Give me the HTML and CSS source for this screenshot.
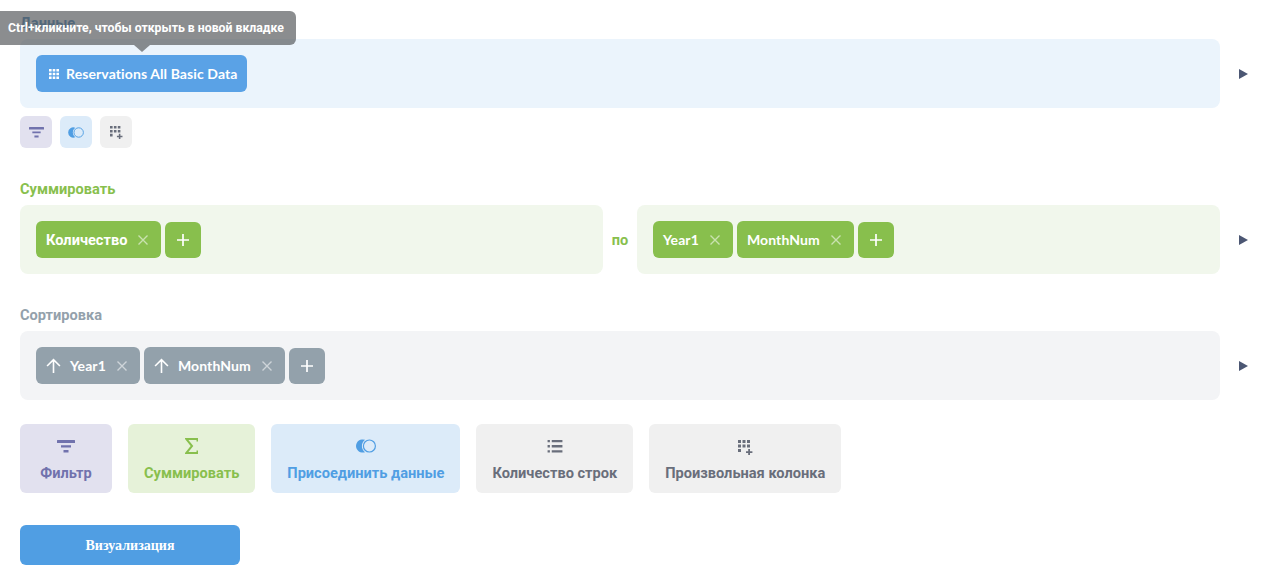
FILE: index.html
```html
<!DOCTYPE html>
<html lang="ru">
<head>
<meta charset="utf-8">
<title>Запрос</title>
<link rel="stylesheet" href="styles.css">
</head>
<body>
<svg class="defs" width="0" height="0" aria-hidden="true">
  <symbol id="i-filter" viewBox="0 0 18 13"><path d="M.5 0h17a.5.5 0 0 1 .5.500V3H0V.5A.5.5 0 0 1 .5 0zM4 5.200h10v2.300H4zM6.500 10h5v2.500h-5z"/></symbol>
  <symbol id="i-join" viewBox="0 0 20 14"><path d="M9.020 .86A7.600 7.600 0 0 0 9.020 13.140 6.600 6.600 0 1 1 9.020 .86z"/><circle cx="13.400" cy="7" r="6" fill="none" stroke="currentColor" stroke-width="1.200"/></symbol>
  <symbol id="i-custom" viewBox="0 0 15 15"><path d="M0 0h3v3H0zM4.500 0h3v3h-3zM9 0h3v3H9zM0 4.500h3v3H0zM4.500 4.500h3v3h-3zM9 4.500h3v3H9zM0 9h3v3H0zM10.200 9h1.800v2.200h2.400V13H12v2.200h-1.800V13H8v-1.800h2.200z"/></symbol>
  <symbol id="i-list" viewBox="0 0 16 14"><path d="M0 0h2.500v2.500H0zM0 5.500h2.500V8H0zM0 11h2.500v2.500H0zM4.500 0H16v2.500H4.500zM4.500 5.500H16V8H4.500zM4.500 11H16v2.500H4.500z"/></symbol>
  <symbol id="i-sigma" viewBox="0 0 13 16"><path d="M12.500 3.500V1H1.200l5.800 7-5.800 7H12.500v-2.500" fill="none" stroke="currentColor" stroke-width="2"/></symbol>
  <symbol id="i-x" viewBox="0 0 12 12"><path d="M1.500 1.500l9 9M10.500 1.500l-9 9" fill="none" stroke="currentColor" stroke-width="1.400"/></symbol>
  <symbol id="i-plus" viewBox="0 0 12 12"><path d="M6 0v12M0 6h12" fill="none" stroke="currentColor" stroke-width="1.700"/></symbol>
  <symbol id="i-up" viewBox="0 0 14 14"><path d="M7 14V1.500M1 7.500l6-6 6 6" fill="none" stroke="currentColor" stroke-width="1.500"/></symbol>
</svg>

<main class="page">
  <section class="step step-data">
    <h2 class="step-title title-data">Данные</h2>
    <div class="step-row">
      <div class="well well-data">
        <a class="pill pill-data">
          <svg class="grid-icon" viewBox="0 0 10 10" fill="currentColor"><path d="M0 0h2.600v2.600H0zM3.700 0h2.600v2.600H3.700zM7.400 0H10v2.600H7.400zM0 3.700h2.600v2.600H0zM3.700 3.700h2.600v2.600H3.700zM7.400 3.700H10v2.600H7.400zM0 7.400h2.600V10H0zM3.700 7.400h2.600V10H3.700zM7.400 7.400H10V10H7.400z"/></svg>
          Reservations All Basic Data
        </a>
      </div>
      <span class="play"></span>
    </div>
    <div class="mini-row">
      <span class="mini tone-filter"><svg class="mini-filter"><use href="#i-filter"/></svg></span>
      <span class="mini tone-join"><svg class="mini-join"><use href="#i-join"/></svg></span>
      <span class="mini tone-grey"><svg class="mini-custom"><use href="#i-custom"/></svg></span>
    </div>
  </section>

  <section class="step step-sum">
    <h2 class="step-title title-sum">Суммировать</h2>
    <div class="step-row">
      <div class="well well-sum well-half-a">
        <span class="pill pill-sum ru">Количество<svg class="x"><use href="#i-x"/></svg></span>
        <span class="add add-sum"><svg class="plus"><use href="#i-plus"/></svg></span>
      </div>
      <span class="by">по</span>
      <div class="well well-sum well-half-b">
        <span class="pill pill-sum">Year1<svg class="x"><use href="#i-x"/></svg></span>
        <span class="pill pill-sum">MonthNum<svg class="x"><use href="#i-x"/></svg></span>
        <span class="add add-sum"><svg class="plus"><use href="#i-plus"/></svg></span>
      </div>
      <span class="play"></span>
    </div>
  </section>

  <section class="step step-sort">
    <h2 class="step-title title-sort">Сортировка</h2>
    <div class="step-row">
      <div class="well well-sort">
        <span class="pill pill-sort"><svg class="up"><use href="#i-up"/></svg>Year1<svg class="x"><use href="#i-x"/></svg></span>
        <span class="pill pill-sort"><svg class="up"><use href="#i-up"/></svg>MonthNum<svg class="x"><use href="#i-x"/></svg></span>
        <span class="add add-sort"><svg class="plus"><use href="#i-plus"/></svg></span>
      </div>
      <span class="play"></span>
    </div>
  </section>

  <div class="actions">
    <button class="action tone-filter"><svg class="act-filter"><use href="#i-filter"/></svg>Фильтр</button>
    <button class="action tone-sum"><svg class="act-sigma"><use href="#i-sigma"/></svg>Суммировать</button>
    <button class="action tone-join"><svg class="act-join"><use href="#i-join"/></svg>Присоединить данные</button>
    <button class="action tone-grey"><svg class="act-list"><use href="#i-list"/></svg>Количество строк</button>
    <button class="action tone-grey"><svg class="act-custom"><use href="#i-custom"/></svg>Произвольная колонка</button>
  </div>

  <button class="visualize">Визуализация</button>

  <div class="tooltip">Ctrl+кликните, чтобы открыть в новой вкладке</div>
</main>
</body>
</html>
```

FILE: styles.css
```css
* { box-sizing: border-box; }
html, body { margin: 0; padding: 0; background: #fff; }
body { font-family: Lato, "Liberation Sans", sans-serif; font-size: 14px; overflow: hidden; height: 586px; }
.defs { position: absolute; }
svg { fill: currentColor; flex: none; }

.page { position: relative; padding: 15px 0 0 20px; width: 1272px; }

.step-title { margin: 0 0 7px; font: 700 14.6px/17px Roboto, "Liberation Sans", sans-serif; }
.title-data { color: #3f7fba; }
.title-sum { color: #88bf4d; }
.title-sort { color: #93a1ab; }

.step-sum { margin-top: 33px; }
.step-sort { margin-top: 33px; }

.step-row { display: flex; align-items: center; width: 1232px; }
.well { display: flex; align-items: center; gap: 4px; height: 69px; padding: 0 16px; border-radius: 8px; }
.well-data { width: 1200px; background: #ebf4fc; }
.well-sum { background: #f1f7ec; }
.well-half-a { width: 583px; }
.well-half-b { width: 583px; }
.well-sort { width: 1200px; background: #f3f4f6; }

.by { width: 34px; text-align: center; color: #88bf4d; font: 700 14.6px Roboto, sans-serif; }

.play { width: 0; height: 0; margin-left: 19px; border-left: 9px solid #4c5773; border-top: 5px solid transparent; border-bottom: 5px solid transparent; }

.pill { display: inline-flex; align-items: center; height: 37px; padding: 0 12px 0 10px; border-radius: 6px; color: #fff; font-weight: 700; font-size: 14px; letter-spacing: .1px; white-space: nowrap; }
.ru { font: 700 14.6px Roboto, "Liberation Sans", sans-serif; letter-spacing: 0; }
.pill-data { background: #5aa2e6; gap: 7px; padding: 0 9px 0 13px; }
.pill-sum { background: #88bf4d; }
.pill-sort { background: #93a1ab; }
.grid-icon { width: 10px; height: 10px; }
.x { width: 12px; height: 12px; margin-left: 10px; color: #fff; opacity: .55; }
.up { width: 15px; height: 15px; margin-right: 9px; }

.add { display: inline-flex; align-items: center; justify-content: center; width: 36px; height: 36px; margin-top: 1px; border-radius: 6px; color: #fff; }
.add-sum { background: #88bf4d; }
.add-sort { background: #93a1ab; }
.plus { width: 12px; height: 12px; }

.mini-row { display: flex; gap: 8px; margin-top: 8px; }
.mini { display: flex; align-items: center; justify-content: center; width: 32px; height: 32px; border-radius: 6px; }
.tone-filter { background: #e2e1ef; color: #7172ad; }
.tone-join { background: #dcebf9; color: #509ee3; }
.tone-grey { background: #f0f0f0; color: #696e7b; }
.tone-sum { background: #e6f2d9; color: #88bf4d; }
.mini-filter { width: 15px; height: 11px; }
.mini-join { width: 16px; height: 11px; }
.mini-custom { width: 13px; height: 13px; }

.actions { display: flex; gap: 16px; margin-top: 24px; }
.action { display: flex; flex-direction: column; align-items: center; min-width: 92px; height: 69px; padding: 16px 16px 0; border: 0; border-radius: 6px; font: 700 14.6px/17px Roboto, "Liberation Sans", sans-serif; white-space: nowrap; }
.action svg { margin-bottom: 12px; }
.act-filter { width: 18px; height: 13px; }
.act-join { width: 20px; height: 14px; margin-top: -1px; }
.act-list { width: 16px; height: 13px; }
.act-custom { width: 15px; height: 15px; margin-bottom: 10px !important; }
.act-sigma { width: 13px; height: 16px; margin-top: -2px; margin-bottom: 11px !important; }

.visualize { display: block; width: 220px; height: 40px; margin-top: 32px; padding: 1px 0 0; border: 0; border-radius: 6px; background: #509ee3; color: #fff; font: 700 14px "Liberation Serif", serif; }

.tooltip { position: absolute; left: 0; top: 11px; width: 296px; height: 34px; padding: 0 0 0 8px; border-radius: 0 6px 6px 0; background: rgba(90,93,96,.7); color: #fff; font: 700 12.27px/34px Roboto, "Liberation Sans", sans-serif; white-space: nowrap; }
.tooltip::after { content: ""; position: absolute; left: 134px; top: 34px; border-top: 7px solid rgba(90,93,96,.7); border-left: 8px solid transparent; border-right: 8px solid transparent; }
```
